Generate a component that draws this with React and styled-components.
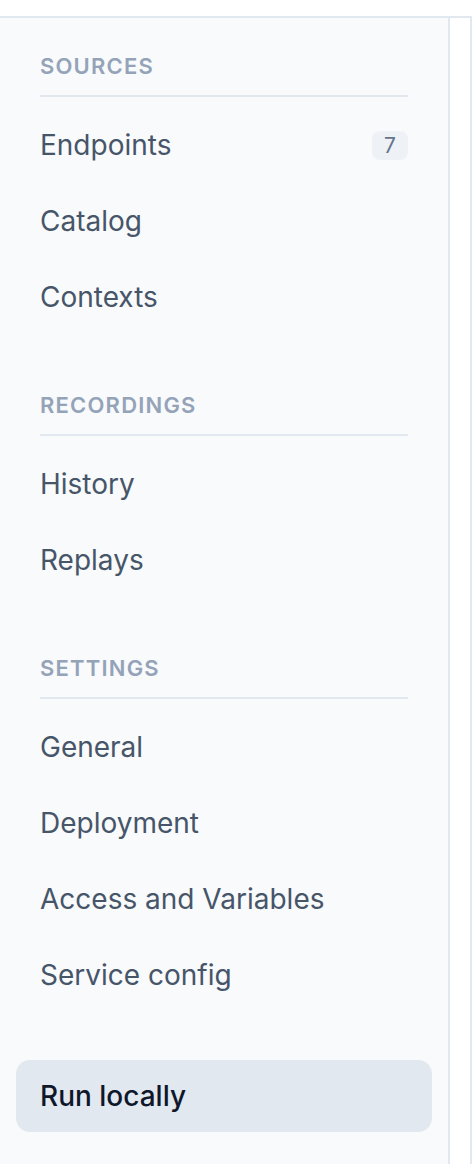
import React from "react";
import styled, { createGlobalStyle } from "styled-components";

const GlobalStyle = createGlobalStyle`
  body {
    margin: 0;
    background: #ffffff;
    font-family: Inter, "Noto Sans", "Liberation Sans", sans-serif;
    -webkit-font-smoothing: antialiased;
  }
`;

const Page = styled.div`
  padding-top: 16px;
  min-height: 1164px;
  box-sizing: border-box;
  display: flex;
  flex-direction: column;
`;

const Frame = styled.div`
  flex: 1;
  display: flex;
  border-top: 2px solid #e2e8f0;
`;

const Sidebar = styled.nav`
  width: 450px;
  flex-shrink: 0;
  box-sizing: border-box;
  background: #f8fafc;
  border-right: 2px solid #e2e8f0;
  padding: 32px 16px 0;
  display: flex;
  flex-direction: column;
`;

const Gutter = styled.div`
  width: 20px;
  background: #ffffff;
  border-right: 2px solid #e2e8f0;
`;

const Section = styled.section`
  display: flex;
  flex-direction: column;
  gap: 4px;
  & + & {
    margin-top: 56px;
  }
`;

const SectionTitle = styled.h3`
  margin: 0 24px 8px;
  padding-bottom: 13px;
  border-bottom: 2px solid #e2e8f0;
  font-size: 22px;
  line-height: 32px;
  font-weight: 600;
  letter-spacing: 1.2px;
  color: #94a3b8;
  text-transform: uppercase;
`;

const Item = styled.a`
  display: flex;
  align-items: center;
  justify-content: space-between;
  height: 72px;
  padding: 0 24px;
  border-radius: 14px;
  font-size: 28px;
  line-height: 40px;
  color: ${(p) => (p.$active ? "#0f172a" : "#475569")};
  font-weight: ${(p) => (p.$active ? 500 : 400)};
  background: ${(p) => (p.$active ? "#e2e8f0" : "transparent")};
  text-decoration: none;
  cursor: pointer;
`;

const Badge = styled.span`
  min-width: 36px;
  height: 29px;
  box-sizing: border-box;
  padding: 0 10px;
  border-radius: 8px;
  background: #eef2f7;
  color: #64748b;
  font-size: 21px;
  line-height: 29px;
  text-align: center;
`;

const Footer = styled.div`
  margin-top: 49px;
`;

const sections = [
  {
    title: "Sources",
    items: [
      { label: "Endpoints", count: 7 },
      { label: "Catalog" },
      { label: "Contexts" },
    ],
  },
  {
    title: "Recordings",
    items: [{ label: "History" }, { label: "Replays" }],
  },
  {
    title: "Settings",
    items: [
      { label: "General" },
      { label: "Deployment" },
      { label: "Access and Variables" },
      { label: "Service config" },
    ],
  },
];

export default function App() {
  return (
    <Page>
      <GlobalStyle />
      <Frame>
        <Sidebar>
          {sections.map((s) => (
            <Section key={s.title}>
              <SectionTitle>{s.title}</SectionTitle>
              {s.items.map((it) => (
                <Item key={it.label}>
                  <span>{it.label}</span>
                  {it.count != null && <Badge>{it.count}</Badge>}
                </Item>
              ))}
            </Section>
          ))}
          <Footer>
            <Item $active>Run locally</Item>
          </Footer>
        </Sidebar>
        <Gutter />
      </Frame>
    </Page>
  );
}
